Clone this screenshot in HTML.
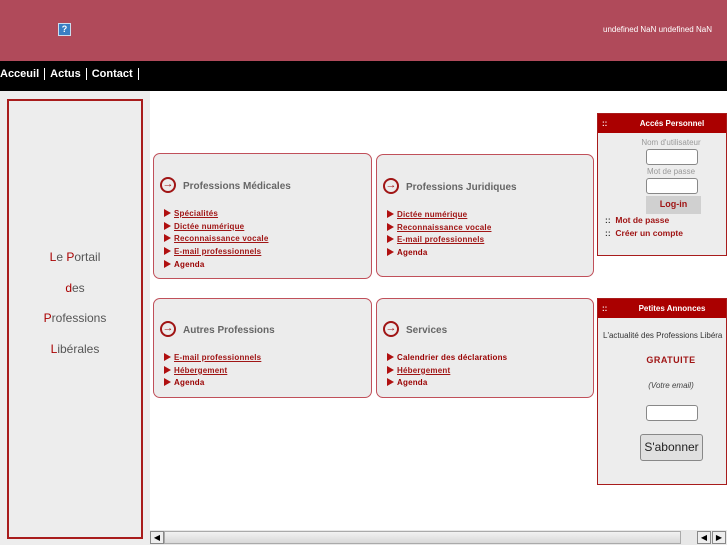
<!DOCTYPE html>
<html><head><meta charset="utf-8"><style>
*{margin:0;padding:0;box-sizing:border-box}
body{width:727px;height:545px;overflow:hidden;background:#fff;font-family:"Liberation Sans",sans-serif;position:relative}
.a{position:absolute}
.hdr{left:0;top:0;width:727px;height:61px;background:#b04a5a}
.nav{left:0;top:61px;width:727px;height:30px;background:#000;color:#fff;font-weight:bold;font-size:11px;line-height:26px}
.nav span{border-right:1px solid #fff;padding:0 5px}
.left{left:0;top:91px;width:150px;height:454px;background:#ededed}
.lb{left:7px;top:99px;width:136px;height:440px;border:2px solid #a81c1c}
.portal{left:7px;width:136px;text-align:center;font-size:12px;color:#555}
.portal b{color:#a00;font-weight:normal}
.box{border:1px solid #c0505a;border-radius:7px;background:#ececec}
.bt{font-size:10px;font-weight:bold;color:#666;position:absolute;left:29px}
.ic{position:absolute;left:6px;width:16px;height:16px;border:2px solid #a01515;border-radius:50%;color:#a01515;font-size:11px;line-height:11px;text-align:center;font-weight:bold}
.ul{position:absolute;left:10px;font-size:8px;font-weight:bold;line-height:12.7px;letter-spacing:0.2px}
.ul div:before{content:"";display:inline-block;border-left:7px solid #b01010;border-top:4px solid transparent;border-bottom:4px solid transparent;margin-right:3px;vertical-align:-1px}
.ul a{color:#a01515;text-decoration:underline}
.ul span{color:#900}
.rp{border:1px solid #a81c1c;background:#ededed}
.rh{height:19px;background:#a00;color:#fff;font-size:8px;font-weight:bold;line-height:19px;text-align:center;position:relative;padding-left:20px}
.inp{position:absolute;background:#fff;border:1px solid #888;border-radius:3px}
</style></head><body>
<div class="a hdr"></div>
<div class="a" style="left:58px;top:23px;width:13px;height:13px;background:#3a7fc4;border:1px solid #cde;color:#fff;font-size:9px;text-align:center;line-height:11px;font-weight:bold">?</div>
<div class="a" style="left:603px;top:25px;color:#fff;font-size:8px">undefined NaN undefined NaN</div>
<div class="a nav"><span style="padding-left:0">Acceuil</span><span>Actus</span><span>Contact</span></div>
<div class="a left"></div>
<div class="a lb"></div>
<div class="a portal" style="top:250px"><b>L</b>e <b>P</b>ortail</div>
<div class="a portal" style="top:281px"><b>d</b>es</div>
<div class="a portal" style="top:311px"><b>P</b>rofessions</div>
<div class="a portal" style="top:342px"><b>L</b>ibérales</div>

<div class="a box" style="left:153px;top:153px;width:219px;height:126px">
<div class="ic" style="top:23px">→</div><div class="bt" style="top:27px">Professions Médicales</div>
<div class="ul" style="top:54px"><div><a>Spécialités</a></div><div><a>Dictée numérique</a></div><div><a>Reconnaissance vocale</a></div><div><a>E-mail professionnels</a></div><div><span>Agenda</span></div></div></div>
<div class="a box" style="left:376px;top:154px;width:218px;height:123px">
<div class="ic" style="top:23px">→</div><div class="bt" style="top:27px">Professions Juridiques</div>
<div class="ul" style="top:54px"><div><a>Dictée numérique</a></div><div><a>Reconnaissance vocale</a></div><div><a>E-mail professionnels</a></div><div><span>Agenda</span></div></div></div>
<div class="a box" style="left:153px;top:298px;width:219px;height:100px">
<div class="ic" style="top:22px">→</div><div class="bt" style="top:26px">Autres Professions</div>
<div class="ul" style="top:53px"><div><a>E-mail professionnels</a></div><div><a>Hébergement</a></div><div><span>Agenda</span></div></div></div>
<div class="a box" style="left:376px;top:298px;width:218px;height:100px">
<div class="ic" style="top:22px">→</div><div class="bt" style="top:26px">Services</div>
<div class="ul" style="top:53px"><div><span>Calendrier des déclarations</span></div><div><a>Hébergement</a></div><div><span>Agenda</span></div></div></div>

<div class="a rp" style="left:597px;top:113px;width:130px;height:143px">
<div class="rh">Accés Personnel<span style="position:absolute;left:4px">::</span></div>
<div class="a" style="left:0;width:146px;top:24px;text-align:center;font-size:8px;color:#999">Nom d'utilisateur</div>
<div class="inp" style="left:48px;top:35px;width:52px;height:16px"></div>
<div class="a" style="left:0;width:146px;top:53px;text-align:center;font-size:8px;color:#999">Mot de passe</div>
<div class="inp" style="left:48px;top:64px;width:52px;height:16px"></div>
<div class="a" style="left:48px;top:82px;width:55px;height:18px;background:#d0d0d0;color:#a01515;font-size:9px;font-weight:bold;text-align:center;line-height:16px">Log-in</div>
<div class="a" style="left:7px;top:100px;font-size:8.5px;font-weight:bold;color:#a01515;line-height:13px"><span style="color:#333">::</span>&nbsp; Mot de passe<br><span style="color:#333">::</span>&nbsp; Créer un compte</div>
</div>
<div class="a rp" style="left:597px;top:298px;width:130px;height:187px">
<div class="rh">Petites Annonces<span style="position:absolute;left:4px">::</span></div>
<div class="a" style="left:5px;top:32px;font-size:8px;color:#333;white-space:nowrap">L'actualité des Professions Libéra</div>
<div class="a" style="left:0;width:146px;top:56px;text-align:center;font-size:9px;font-weight:bold;color:#a01515;letter-spacing:0.5px">GRATUITE</div>
<div class="a" style="left:0;width:146px;top:82px;text-align:center;font-size:8px;font-style:italic;color:#444">(Votre email)</div>
<div class="inp" style="left:48px;top:106px;width:52px;height:16px"></div>
<div class="a" style="left:42px;top:135px;width:63px;height:27px;background:#e0e0e0;border:1px solid #888;border-radius:3px;font-size:12px;text-align:center;line-height:25px;color:#222">S'abonner</div>
</div>

<div class="a" style="left:150px;top:530px;width:577px;height:15px;background:#e8e8e8"></div>
<div class="a" style="left:150px;top:531px;width:14px;height:13px;border:1px solid #888;background:#eee;font-size:8px;text-align:center;line-height:11px">◀</div>
<div class="a" style="left:164px;top:531px;width:517px;height:13px;border:1px solid #aaa;background:linear-gradient(#f2f2f2,#d8d8d8)"></div>
<div class="a" style="left:697px;top:531px;width:14px;height:13px;border:1px solid #888;background:#eee;font-size:8px;text-align:center;line-height:11px">◀</div>
<div class="a" style="left:712px;top:531px;width:14px;height:13px;border:1px solid #888;background:#eee;font-size:8px;text-align:center;line-height:11px">▶</div>
</body></html>
